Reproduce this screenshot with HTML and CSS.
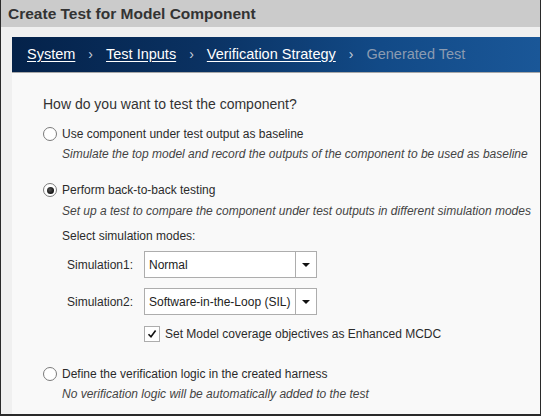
FILE: index.html
```html
<!DOCTYPE html>
<html>
<head>
<meta charset="utf-8">
<link rel="stylesheet" href="styles.css">
</head>
<body>
<div class="window">
  <div class="titlebar">Create Test for Model Component</div>
  <div class="panel">
    <nav class="crumbs">
      <a class="crumb">System</a><span class="sep">›</span>
      <a class="crumb">Test Inputs</a><span class="sep">›</span>
      <a class="crumb">Verification Strategy</a><span class="sep">›</span>
      <span class="crumb current">Generated Test</span>
    </nav>
    <div class="content">
      <p class="question">How do you want to test the component?</p>

      <div class="option">
        <div class="row"><span class="radio"></span><span class="label">Use component under test output as baseline</span></div>
        <div class="desc">Simulate the top model and record the outputs of the component to be used as baseline</div>
      </div>

      <div class="option middle">
        <div class="row"><span class="radio checked"></span><span class="label">Perform back-to-back testing</span></div>
        <div class="desc">Set up a test to compare the component under test outputs in different simulation modes</div>
        <div class="sub">
          <div class="subtitle">Select simulation modes:</div>
          <div class="field">
            <span class="flabel">Simulation1:</span>
            <div class="select"><span class="value">Normal</span><span class="arrow"></span></div>
          </div>
          <div class="field second">
            <span class="flabel">Simulation2:</span>
            <div class="select"><span class="value">Software-in-the-Loop (SIL)</span><span class="arrow"></span></div>
          </div>
          <div class="check-row">
            <span class="checkbox">
              <svg width="10" height="10" viewBox="0 0 10 10"><path d="M1.5 5.2 L4 7.8 L8.6 1.6" fill="none" stroke="#111" stroke-width="1.6"/></svg>
            </span>
            <span class="label">Set Model coverage objectives as Enhanced MCDC</span>
          </div>
        </div>
      </div>

      <div class="option last">
        <div class="row"><span class="radio"></span><span class="label">Define the verification logic in the created harness</span></div>
        <div class="desc">No verification logic will be automatically added to the test</div>
      </div>
    </div>
  </div>
</div>
</body>
</html>
```
FILE: styles.css
```css
* { box-sizing: border-box; }
html, body { margin: 0; padding: 0; }
body {
  width: 541px;
  height: 416px;
  overflow: hidden;
  font-family: "Liberation Sans", Arial, sans-serif;
  color: #333;
  background: #fff;
}
.window {
  width: 541px;
  height: 416px;
  border-left: 1px solid #2a2a2a;
  border-right: 1px solid #2a2a2a;
  border-bottom: 2px solid #2a2a2a;
  display: flex;
  flex-direction: column;
}
.titlebar {
  height: 27px;
  background: #cbcbcb;
  font-weight: bold;
  font-size: 15.5px;
  line-height: 27px;
  padding-left: 7px;
  color: #333;
  flex: none;
}
.panel {
  flex: 1;
  background: #f0f0f0;
  padding: 10px 0 0 11px;
  display: flex;
  flex-direction: column;
}
.crumbs {
  height: 36px;
  flex: none;
  background: linear-gradient(90deg, #04224a 0%, #0a3161 35%, #124a87 70%, #1a5798 100%);
  border-bottom: 1px solid #a8a8a8;
  display: flex;
  align-items: center;
  padding-left: 15px;
  padding-bottom: 1px;
  font-size: 14.5px;
  white-space: nowrap;
}
.crumb {
  color: #fff;
  text-decoration: underline;
  text-underline-offset: 2px;
}
.crumb.current {
  color: #8b9bb1;
  text-decoration: none;
}
.sep {
  color: #c8d0dc;
  margin: 0 13px;
  font-size: 14px;
}
.content {
  flex: 1;
  background: #f9f9f9;
  padding: 22px 0 0 31px;
}
.question {
  margin: 0 0 13px 0;
  font-size: 14px;
  line-height: 18px;
  color: #333;
}
.option { margin-bottom: 20px; }
.option.middle { margin-bottom: 24px; }
.option.last { margin-bottom: 0; }
.row {
  display: flex;
  align-items: center;
  height: 16px;
}
.radio {
  width: 14px;
  height: 14px;
  border: 1px solid #7a7a7a;
  border-radius: 50%;
  background: #fff;
  margin-right: 5px;
  flex: none;
  display: flex;
  align-items: center;
  justify-content: center;
}
.radio.checked::after {
  content: "";
  width: 7px;
  height: 7px;
  border-radius: 50%;
  background: radial-gradient(circle at 40% 40%, #555 0%, #111 70%);
}
.label {
  font-size: 12px;
  line-height: 16px;
  color: #2b2b2b;
}
.desc {
  margin-top: 4px;
  margin-left: 19px;
  font-size: 12px;
  line-height: 16px;
  font-style: italic;
  color: #444;
  white-space: nowrap;
}
.middle .desc { margin-top: 5px; }
.sub {
  margin-left: 19px;
}
.subtitle {
  margin-top: 9px;
  font-size: 12px;
  line-height: 16px;
  color: #2b2b2b;
}
.field {
  display: flex;
  align-items: center;
  margin-top: 7px;
}
.field.second { margin-top: 10px; }
.flabel {
  width: 82px;
  padding-left: 5px;
  font-size: 12px;
  color: #2b2b2b;
}
.select {
  width: 173px;
  height: 27px;
  border: 1px solid #adadad;
  background: #fff;
  display: flex;
  align-items: center;
}
.value {
  flex: 1;
  padding-left: 4px;
  font-size: 12px;
  color: #222;
  white-space: nowrap;
}
.arrow {
  width: 21px;
  height: 100%;
  border-left: 1px solid #adadad;
  display: flex;
  align-items: center;
  justify-content: center;
}
.arrow::after {
  content: "";
  border-left: 4px solid transparent;
  border-right: 4px solid transparent;
  border-top: 4px solid #111;
}
.check-row {
  display: flex;
  align-items: center;
  margin-top: 11px;
  margin-left: 82px;
}
.checkbox {
  width: 16px;
  height: 16px;
  border: 1px solid #adadad;
  background: #fff;
  display: flex;
  align-items: center;
  justify-content: center;
  margin-right: 5px;
  flex: none;
}
```
